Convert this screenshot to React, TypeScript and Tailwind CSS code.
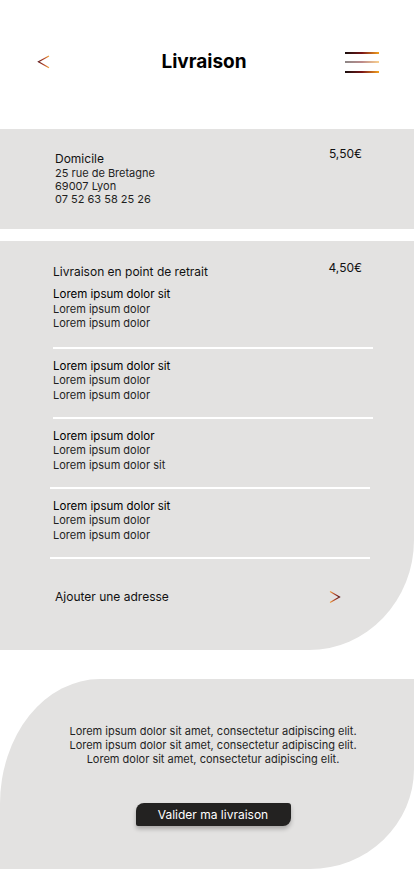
import React from 'react';

const groups = [
  { lines: ['Lorem ipsum dolor sit', 'Lorem ipsum dolor', 'Lorem ipsum dolor'], line: 'ml-0 mr-[41px]', first: true },
  { lines: ['Lorem ipsum dolor sit', 'Lorem ipsum dolor', 'Lorem ipsum dolor'], line: 'ml-0 mr-[41px]' },
  { lines: ['Lorem ipsum dolor', 'Lorem ipsum dolor', 'Lorem ipsum dolor sit'], line: '-ml-[3px] mr-[44px]' },
  { lines: ['Lorem ipsum dolor sit', 'Lorem ipsum dolor', 'Lorem ipsum dolor'], line: '-ml-[3px] mr-[44px]' },
];

const ChevronLeftIcon = () => (
  <svg width="14" height="16" viewBox="0 0 14 16" fill="none">
    <defs>
      <linearGradient id="chevL" x1="1" y1="0" x2="12" y2="0" gradientUnits="userSpaceOnUse">
        <stop offset="0" stopColor="#5a1416" />
        <stop offset="0.55" stopColor="#b4452a" />
        <stop offset="1" stopColor="#f3a63a" />
      </linearGradient>
    </defs>
    <path d="M12 2 L1.5 7.8 L12 13.8" stroke="url(#chevL)" strokeWidth="1.2" />
  </svg>
);

const ChevronRightIcon = () => (
  <svg width="12" height="14" viewBox="0 0 12 14" fill="none">
    <defs>
      <linearGradient id="chevR" x1="1" y1="0" x2="10.5" y2="0" gradientUnits="userSpaceOnUse">
        <stop offset="0" stopColor="#f3a63a" />
        <stop offset="0.45" stopColor="#b4452a" />
        <stop offset="1" stopColor="#5a1416" />
      </linearGradient>
    </defs>
    <path d="M1 1.5 L10.5 7 L1 12.5" stroke="url(#chevR)" strokeWidth="1.2" />
  </svg>
);

const Burger = () => (
  <div className="flex flex-col gap-[7.5px] w-[34px]">
    <span className="block h-[2px] w-full bg-gradient-to-r from-[#1a0d0d] via-[#7a1216] to-[#f5a21c]" />
    <span className="block h-[2px] w-full bg-gradient-to-r from-[#1a0d0d] via-[#7a1216] to-[#f5a21c] opacity-50" />
    <span className="block h-[2px] w-full bg-gradient-to-r from-[#1a0d0d] via-[#7a1216] to-[#f5a21c]" />
  </div>
);

export default function App() {
  return (
    <div className="w-[414px] min-h-[896px] bg-white font-['Inter','Liberation_Sans',sans-serif] text-[#1f1f1f]">
      {/* Header */}
      <div className="flex items-center pt-[50px] pl-[37px] pr-[35px] h-[74px]">
        <ChevronLeftIcon />
        <h1 className="flex-1 text-center text-[19px] font-bold leading-[24px] text-black pl-[12px]">Livraison</h1>
        <Burger />
      </div>

      {/* Domicile */}
      <div className="mt-[55px] h-[100px] bg-[#e3e2e1] flex justify-between pl-[55px] pr-[52px] pt-[21px]">
        <div>
          <div className="text-[12px] leading-[17px] text-[#111]">Domicile</div>
          <div className="text-[11px] leading-[13px]">25 rue de Bretagne</div>
          <div className="text-[11px] leading-[13px]">69007 Lyon</div>
          <div className="text-[11px] leading-[13px]">07 52 63 58 25 26</div>
        </div>
        <div className="text-[12px] leading-[16px] text-[#111] -mt-[4px]">5,50€</div>
      </div>

      {/* Point de retrait */}
      <div className="mt-[12px] h-[409px] bg-[#e3e2e1] rounded-br-[105px_110px] pl-[53px] pt-[23px]">
        <div className="flex justify-between pr-[52px]">
          <div className="text-[12px] leading-[16px] text-[#111]">Livraison en point de retrait</div>
          <div className="text-[12px] leading-[16px] text-[#111] -mt-[4px]">4,50€</div>
        </div>
        {groups.map((g, i) => (
          <div key={i}>
            <div className={g.first ? 'pt-[7px] pb-[16px]' : 'pt-[10px] pb-[14.5px]'}>
              {g.lines.map((l, j) => (
                <div key={j} className={j === 0 ? 'text-[11.5px] leading-[14.5px] text-black' : 'text-[11px] leading-[14.5px]'}>
                  {l}
                </div>
              ))}
            </div>
            <div className={`h-[2px] bg-white ${g.line}`} />
          </div>
        ))}
        <div className="flex items-center justify-between pl-[2px] pr-[73px] mt-[30px]">
          <span className="text-[12px] leading-[16px] text-[#111]">Ajouter une adresse</span>
          <ChevronRightIcon />
        </div>
      </div>

      {/* Validation */}
      <div className="mt-[29px] h-[190px] bg-[#e3e2e1] rounded-tl-[100px_125px] rounded-br-[104px_100px] flex flex-col items-center pt-[45px] pl-[12px]">
        <p className="text-[11px] leading-[14px] text-center">
          Lorem ipsum dolor sit amet, consectetur adipiscing elit.
          <br />
          Lorem ipsum dolor sit amet, consectetur adipiscing elit.
          <br />
          Lorem dolor sit amet, consectetur adipiscing elit.
        </p>
        <button className="mt-[37px] w-[155px] h-[23px] bg-[#232221] text-white text-[12px] leading-[23px] rounded-tl-[8px] rounded-br-[8px] rounded-tr-[3px] rounded-bl-[2px] shadow-[0_3px_4px_rgba(0,0,0,0.25)]">
          Valider ma livraison
        </button>
      </div>
    </div>
  );
}
